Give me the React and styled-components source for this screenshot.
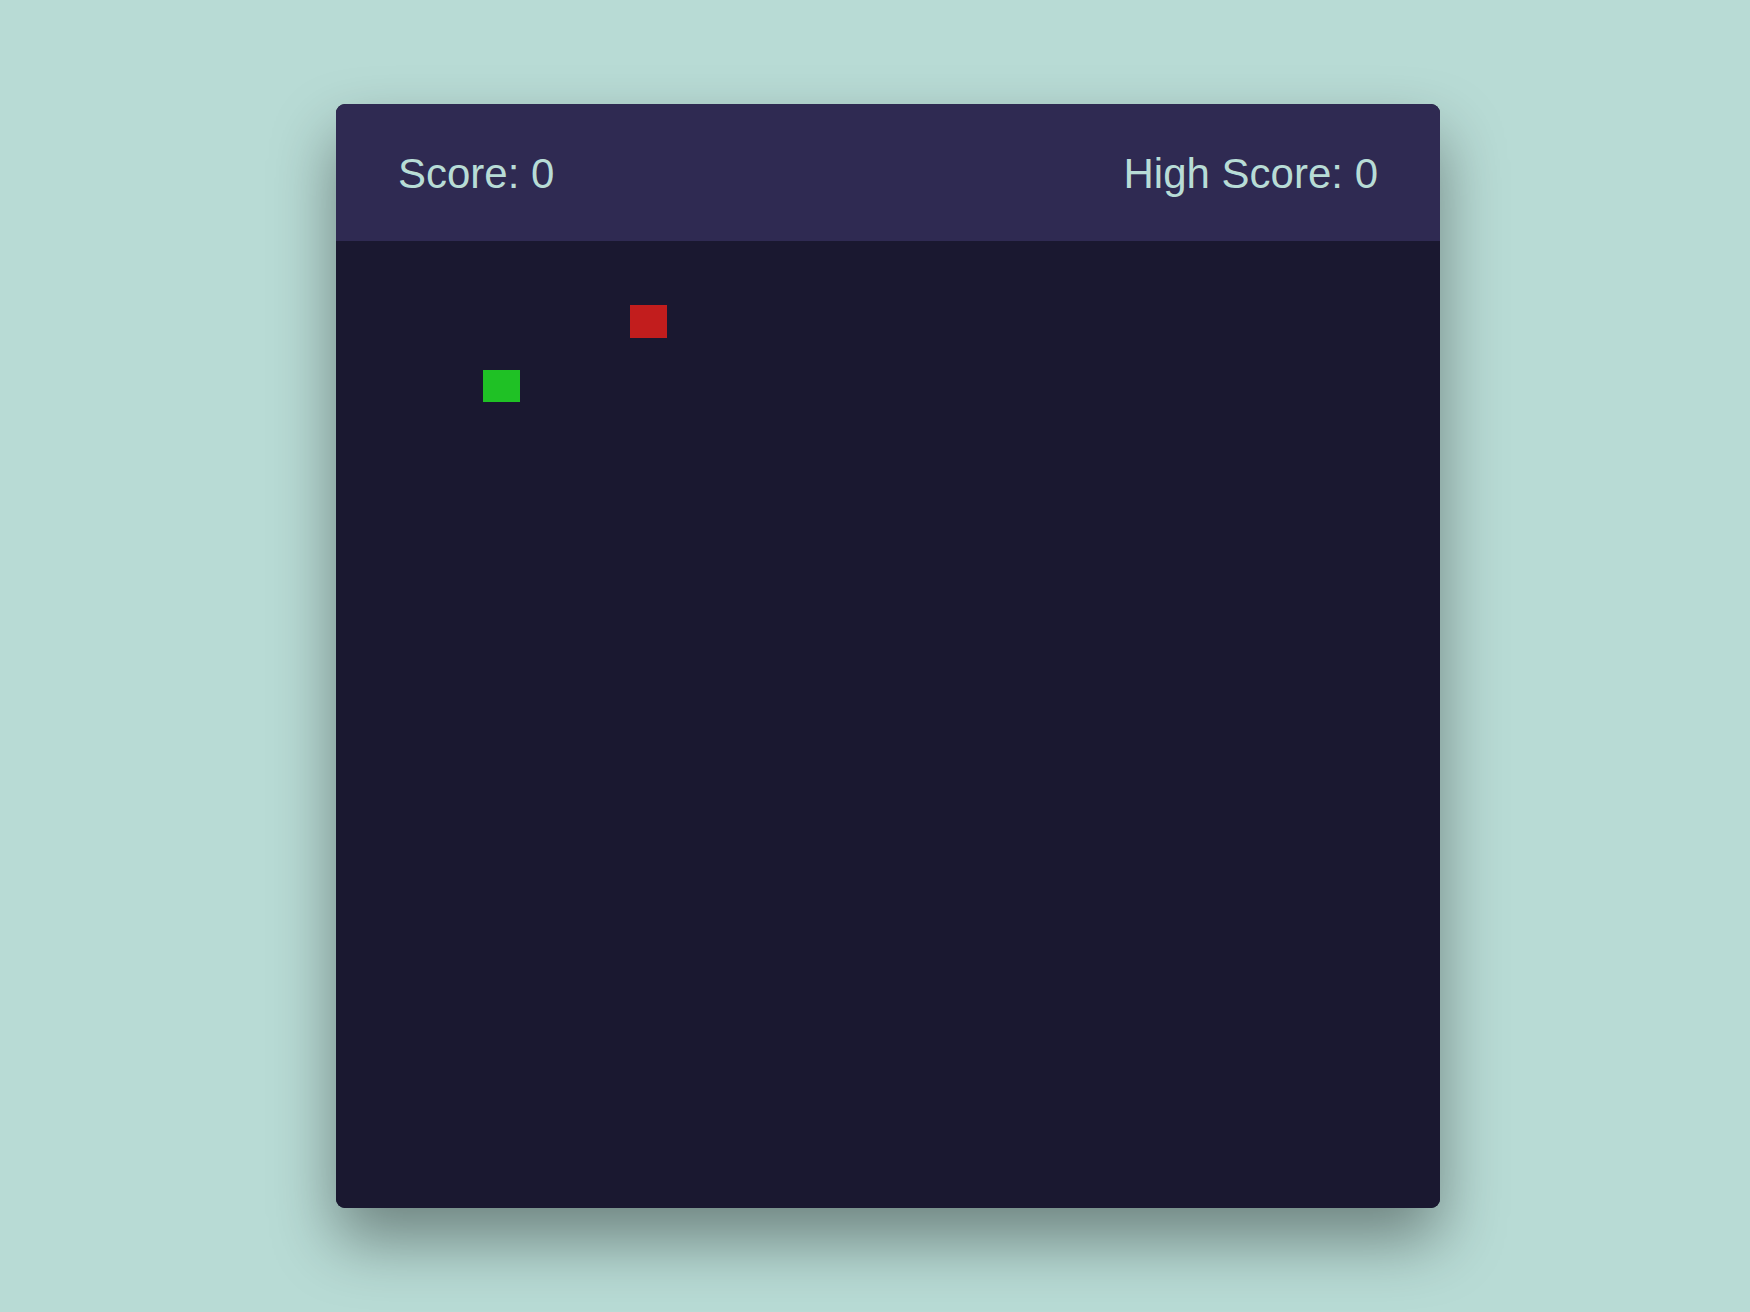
import styled, { createGlobalStyle } from 'styled-components';

const COLS = 30;
const ROWS = 30;

const snake = [{ x: 4, y: 4 }];
const food = { x: 8, y: 2 };

const GlobalStyle = createGlobalStyle`
  html, body {
    margin: 0;
    padding: 0;
    background: #b8dbd5;
    font-family: "Liberation Sans", Arial, sans-serif;
  }
`;

export default function App() {
  return (
    <>
      <GlobalStyle />
      <Page>
        <GameCard>
          <ScoreBar>
            <ScoreText>Score: 0</ScoreText>
            <ScoreText>High Score: 0</ScoreText>
          </ScoreBar>
          <Board>
            {snake.map((s, i) => (
              <Cell key={i} $x={s.x} $y={s.y} $kind="snake" />
            ))}
            <Cell $x={food.x} $y={food.y} $kind="food" />
          </Board>
        </GameCard>
      </Page>
    </>
  );
}

const Page = styled.div`
  min-height: 100vh;
  display: flex;
  align-items: center;
  justify-content: center;
  padding-left: 26px;
  box-sizing: border-box;
`;

const GameCard = styled.div`
  width: 1104px;
  height: 1104px;
  display: flex;
  flex-direction: column;
  border-radius: 9px;
  overflow: hidden;
  background: #1a1830;
  box-shadow: 0 32px 64px rgba(0, 0, 0, 0.4);
`;

const ScoreBar = styled.div`
  height: 137px;
  flex-shrink: 0;
  display: flex;
  align-items: center;
  justify-content: space-between;
  padding: 0 62px;
  background: #2f2a52;
`;

const ScoreText = styled.span`
  color: #b8dcd6;
  font-size: 42px;
  line-height: 1;
  padding-top: 2px;
`;

const Board = styled.div`
  flex: 1;
  display: grid;
  grid-template-columns: repeat(${COLS}, 1fr);
  grid-template-rows: repeat(${ROWS}, 1fr);
  background: #1a1830;
`;

const Cell = styled.div`
  grid-column: ${p => p.$x + 1};
  grid-row: ${p => p.$y + 1};
  background: ${p => (p.$kind === 'food' ? '#c21d1d' : '#1fc125')};
`;
